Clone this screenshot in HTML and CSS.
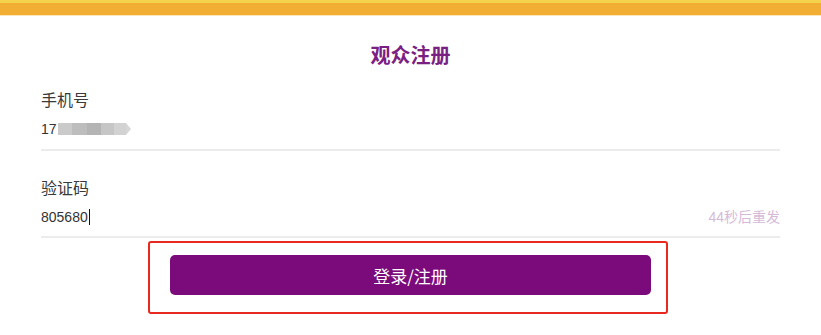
FILE: index.html
```html
<!DOCTYPE html>
<html lang="zh-CN">
<head>
<meta charset="utf-8">
<title>观众注册</title>
<link rel="stylesheet" href="styles.css">
</head>
<body>
<div class="topbar"></div>
<main class="form">
  <h1 class="title">观众注册</h1>
  <div class="field">
    <div class="label">手机号</div>
    <div class="value">
      <span>17</span>
      <span class="mask">
        <i class="m1"></i><i class="m2"></i><i class="m3"></i><i class="m4"></i><i class="m5"></i><i class="tip"></i>
      </span>
    </div>
  </div>
  <div class="field field-code">
    <div class="label">验证码</div>
    <div class="value">
      <span>805680</span><span class="caret"></span>
      <span class="resend">44秒后重发</span>
    </div>
  </div>
  <div class="submit-wrap">
    <button class="submit" type="button">登录/注册</button>
  </div>
</main>
</body>
</html>
```

FILE: styles.css
```css
* { box-sizing: border-box; }
html, body { margin: 0; padding: 0; background: #fff; }
body {
  font-family: "Liberation Sans", "Noto Sans CJK SC", sans-serif;
  color: #333;
  width: 821px;
  height: 335px;
  overflow: hidden;
}
.topbar {
  height: 16px;
  background: #f2ad33;
  border-top: 3px solid #f5d24c;
  border-bottom: 1px solid #fbe6b8;
}
.form {
  padding: 0 41px;
}
.title {
  margin: 25px 0 0;
  height: 28px;
  line-height: 28px;
  text-align: center;
  font-size: 20px;
  font-weight: 700;
  color: #7a2082;
  font-family: "Noto Sans CJK SC", sans-serif;
}
.field {
  margin-top: 20px;
  border-bottom: 2px solid #ececec;
  padding-bottom: 10px;
}
.field-code {
  margin-top: 26px;
  padding-bottom: 9px;
}
.label {
  height: 20px;
  line-height: 20px;
  font-size: 16px;
  color: #3a3a3a;
  font-family: "Noto Sans CJK SC", sans-serif;
}
.value {
  margin-top: 10px;
  height: 20px;
  line-height: 20px;
  font-size: 14px;
  color: #333;
  display: flex;
  align-items: center;
}
.mask {
  display: flex;
  align-items: center;
  height: 13px;
  margin-left: 1px;
  filter: blur(0.7px);
}
.mask i { display: block; height: 12px; }
.mask .m1 { width: 14px; background: #cacaca; }
.mask .m2 { width: 15px; background: #bdbdbd; }
.mask .m3 { width: 14px; background: #b4b4b4; }
.mask .m4 { width: 13px; background: #c6c6c6; }
.mask .m5 { width: 12px; background: #d2d2d2; }
.mask .tip {
  width: 0; height: 0;
  border-top: 6px solid transparent;
  border-bottom: 6px solid transparent;
  border-left: 5px solid #d6d6d6;
}
.caret {
  display: inline-block;
  width: 1px;
  height: 16px;
  background: #111;
  margin-left: 1px;
}
.resend {
  margin-left: auto;
  font-size: 14px;
  color: #d5bad8;
  font-family: "Liberation Sans", "Noto Sans CJK SC", sans-serif;
}
.submit-wrap {
  margin: 3px 0 0 107px;
  width: 520px;
  border: 2px solid #e8291f;
  border-radius: 3px;
  padding: 12px 15px 17px 20px;
}
.submit {
  display: block;
  width: 481px;
  height: 40px;
  border: 0;
  border-radius: 5px;
  background: #7b0a7b;
  color: #fff;
  font-size: 17px;
  font-family: "Noto Sans CJK SC", sans-serif;
  padding: 0;
  cursor: pointer;
}
```
